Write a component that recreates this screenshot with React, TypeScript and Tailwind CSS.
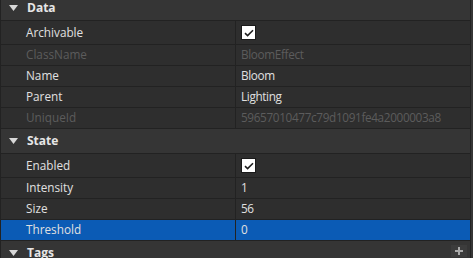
import React from 'react';

type Row = {
  label: string;
  value?: string;
  check?: boolean;
  disabled?: boolean;
  selected?: boolean;
};

type Section = { title: string; rows: Row[] };

const SECTIONS: Section[] = [
  {
    title: 'Data',
    rows: [
      { label: 'Archivable', check: true },
      { label: 'ClassName', value: 'BloomEffect', disabled: true },
      { label: 'Name', value: 'Bloom' },
      { label: 'Parent', value: 'Lighting' },
      { label: 'UniqueId', value: '59657010477c79d1091fe4a2000003a8', disabled: true },
    ],
  },
  {
    title: 'State',
    rows: [
      { label: 'Enabled', check: true },
      { label: 'Intensity', value: '1' },
      { label: 'Size', value: '56' },
      { label: 'Threshold', value: '0', selected: true },
    ],
  },
  { title: 'Tags', rows: [] },
];

function Caret() {
  return (
    <svg width="9" height="6" viewBox="0 0 9 6" className="shrink-0">
      <path d="M0 0h9L4.5 6z" fill="#d8d8d8" />
    </svg>
  );
}

function Checkbox() {
  return (
    <div className="w-[15px] h-[15px] bg-white border border-[#1a1a1a] flex items-center justify-center">
      <svg width="10" height="8" viewBox="0 0 10 8">
        <path d="M1 4.2l2.6 2.4L9 1.2" stroke="#1e1e1e" strokeWidth="1.6" fill="none" />
      </svg>
    </div>
  );
}

function Header({ title }: { title: string }) {
  return (
    <div className="h-[25px] shrink-0 flex items-center bg-[#353535] border-b border-[#222] pl-[8px]">
      <Caret />
      <span className="ml-[9px] font-bold text-[12px] text-[#e6e6e6]">{title}</span>
    </div>
  );
}

function PropRow({ row }: { row: Row }) {
  const text = row.disabled ? 'text-[#5c5c5c]' : 'text-[#e0e0e0]';
  const bg = row.selected ? 'bg-[#0b5bb5]' : 'bg-[#2e2e2e]';
  return (
    <div className={`${row.check ? 'h-[24px]' : 'h-[21px]'} shrink-0 flex border-b border-[#222] ${bg}`}>
      <div className={`w-[235px] shrink-0 flex items-center pl-[25px] border-r border-[#222] text-[11.75px] ${text}`}>
        {row.label}
      </div>
      <div className={`flex-1 min-w-0 flex items-center pl-[5px] text-[11.75px] tracking-[-0.35px] whitespace-nowrap ${text}`}>
        {row.check ? <Checkbox /> : row.value}
      </div>
    </div>
  );
}

export default function App() {
  return (
    <div
      className="w-[473px] h-[258px] overflow-hidden flex bg-[#2e2e2e]"
      style={{ fontFamily: '"Open Sans", "Noto Sans", sans-serif' }}
    >
      <div className="w-[471px] shrink-0 border-l border-r border-[#222] overflow-hidden relative">
        <div className="-mt-[4px] flex flex-col">
          {SECTIONS.map((s) => (
            <React.Fragment key={s.title}>
              <Header title={s.title} />
              {s.rows.map((r) => (
                <PropRow key={r.label} row={r} />
              ))}
            </React.Fragment>
          ))}
        </div>
        <div className="absolute left-[450px] top-[245px] w-[16px] h-[12px] bg-[#3c3c3c] flex items-center justify-center">
          <svg width="10" height="10" viewBox="0 0 10 10">
            <path d="M5 1v8M1 5h8" stroke="#aaaaaa" strokeWidth="2" />
          </svg>
        </div>
      </div>
      <div className="flex-1 bg-[#353535]" />
    </div>
  );
}
